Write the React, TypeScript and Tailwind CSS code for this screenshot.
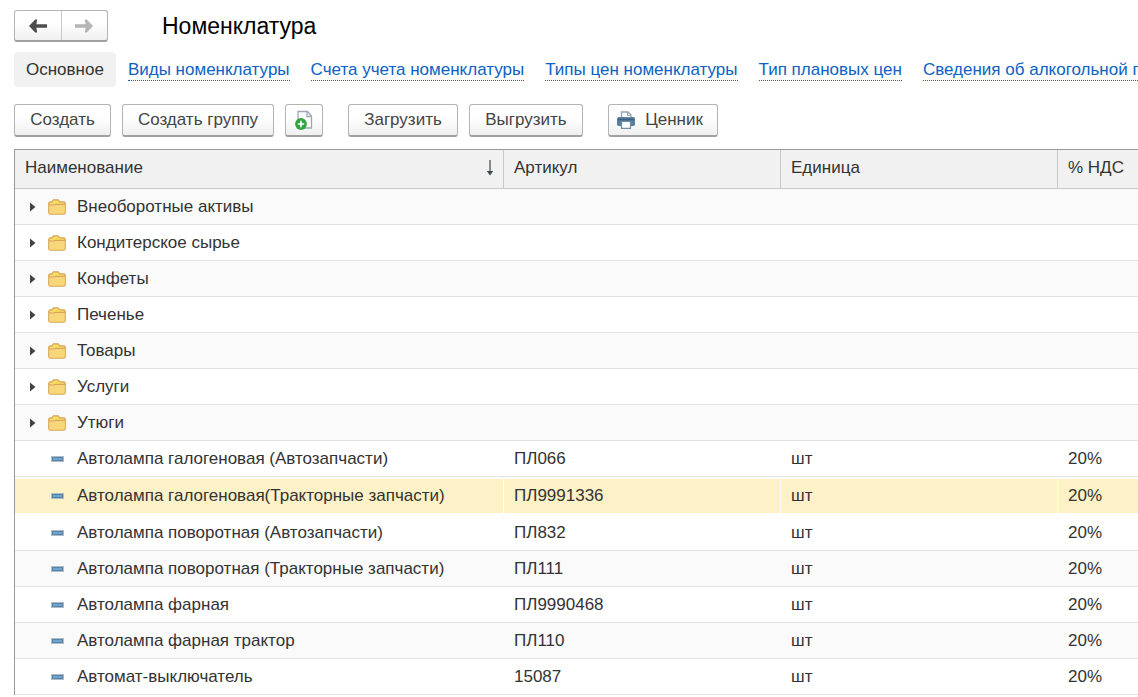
import { ReactNode } from "react"

const links = [
    "Виды номенклатуры",
    "Счета учета номенклатуры",
    "Типы цен номенклатуры",
    "Тип плановых цен",
    "Сведения об алкогольной п",
]

const folders = [
    "Внеоборотные активы",
    "Кондитерское сырье",
    "Конфеты",
    "Печенье",
    "Товары",
    "Услуги",
    "Утюги",
]

const items = [
    { name: "Автолампа галогеновая (Автозапчасти)", article: "ПЛ066" },
    { name: "Автолампа галогеновая(Тракторные запчасти)", article: "ПЛ9991336", selected: true },
    { name: "Автолампа поворотная (Автозапчасти)", article: "ПЛ832" },
    { name: "Автолампа поворотная (Тракторные запчасти)", article: "ПЛ111" },
    { name: "Автолампа фарная", article: "ПЛ9990468" },
    { name: "Автолампа фарная трактор", article: "ПЛ110" },
    { name: "Автомат-выключатель", article: "15087" },
]

const ArrowIcon = ({ className }: { className: string }) => (
    <svg className={className} width="18" height="14" viewBox="0 0 18 14" fill="currentColor">
        <path d="M0 7 6.2.4h2L7.4 5.2H18v3.6H7.4l.8 4.8h-2z" />
    </svg>
)

const NewFileIcon = () => (
    <svg width="18" height="20" viewBox="0 0 18 20" fill="none">
        <path d="M3 1.5h9.5l4 4.5v12H3z" fill="#fbfcfd" stroke="#9aa8b7" strokeWidth="1.3" />
        <path d="M12 1.5V6.5h4.5" stroke="#9aa8b7" strokeWidth="1.3" />
        <circle cx="6" cy="14" r="5.9" fill="#35a342" />
        <path d="M6 10.8v6.4M2.8 14h6.4" stroke="#fff" strokeWidth="1.6" />
    </svg>
)

const PrinterIcon = () => (
    <svg width="18" height="18" viewBox="0 0 18 18" fill="none">
        <path d="M4.5 7V1h6.5l3 3v3" fill="#fff" stroke="#94a5b8" strokeWidth="1.3" />
        <path d="M10.5 1v3.5H14" stroke="#94a5b8" />
        <rect x="0" y="6" width="18" height="9" rx="1.8" fill="#5b7f9f" />
        <path d="M1 8.5h16" stroke="#3c5f80" strokeWidth="1.6" />
        <path d="M4.5 10.5h9v6.8h-9z" fill="#fff" stroke="#6f8ba6" strokeWidth="1.2" />
    </svg>
)

const FolderIcon = () => (
    <svg width="18" height="16" viewBox="0 0 18 16" fill="none">
        <path d="M.8 13.5V4l1.2-1.2h1.9L5.5.8h4.6l1.7 2h4.2L17.2 4v9.5q0 1.7-1.7 1.7h-13Q.8 15.2.8 13.5z" fill="#fadd62" stroke="#d6a55c" strokeWidth="1.3" />
        <path d="M1.4 6h15.2v7.6q0 1-1 1H2.4q-1 0-1-1z" fill="#f8d77a" />
        <path d="M1 6h5.4l1-.6H17" stroke="#d6a55c" strokeWidth="1.1" />
    </svg>
)

const ItemIcon = () => (
    <svg width="13" height="6" viewBox="0 0 13 6" shapeRendering="crispEdges">
        <rect width="13" height="6" fill="#aebcc8" />
        <rect x="1" y="1" width="11" height="4" fill="#5784a9" />
        <rect x="2" y="2" width="9" height="2" fill="#6fa3cb" />
    </svg>
)

const Button = ({ children, className }: { children: ReactNode; className: string }) => (
    <button
        type="button"
        className={`flex h-[33px] items-center justify-center rounded-[3px] border border-[#b3b3b3] border-b-2 border-b-[#a0a0a0] bg-linear-to-b from-white from-40% to-[#f0f0f0] text-[#444] ${className}`}
    >
        {children}
    </button>
)

const Header = ({ children, className }: { children: ReactNode; className: string }) => (
    <th className={`border-b border-[#c8c8c8] p-0 pb-0.5 text-left font-normal ${className}`}>{children}</th>
)

const App = () => {
    return (
        <main className="overflow-hidden bg-white pl-3.5 pt-2.5 font-['Liberation_Sans',Arial,sans-serif] text-[17px] leading-6 whitespace-nowrap text-[#333]">
            <header className="flex h-8 items-center">
                <div className="flex h-8 w-[94px] rounded-[3px] border border-[#b3b3b3] border-b-2 border-b-[#a0a0a0] bg-linear-to-b from-white from-40% to-[#f0f0f0]">
                    <button type="button" aria-label="Назад" className="flex flex-1 items-center justify-center border-r border-[#c8c8c8] text-[#4d4d4d]">
                        <ArrowIcon className="" />
                    </button>
                    <button type="button" aria-label="Вперед" className="flex flex-1 items-center justify-center text-[#b5b5b5]">
                        <ArrowIcon className="rotate-180" />
                    </button>
                </div>
                <h1 className="ml-[54px] text-[23px] text-black">Номенклатура</h1>
            </header>

            <nav className="mt-2.5 flex h-[35px] items-center">
                <span className="flex h-full shrink-0 items-center rounded-sm bg-[#f1f1f1] px-3">Основное</span>
                <div className="ml-3 flex gap-[21px]">
                    {links.map((link) => (
                        <a key={link} href="#" className="border-b border-dotted border-[#0a62c4] leading-[21px] text-[#0a62c4]">
                            {link}
                        </a>
                    ))}
                </div>
            </nav>

            <div className="mt-[17px] flex">
                <Button className="w-[97px]">Создать</Button>
                <Button className="ml-[11px] w-[152px]">Создать группу</Button>
                <button
                    type="button"
                    aria-label="Создать копированием"
                    className="ml-[11px] flex h-[33px] w-[38px] items-center justify-center rounded-[3px] border border-[#b3b3b3] border-b-2 border-b-[#a0a0a0] bg-linear-to-b from-white from-40% to-[#f0f0f0]"
                >
                    <NewFileIcon />
                </button>
                <Button className="ml-[25px] w-[110px]">Загрузить</Button>
                <Button className="ml-[11px] w-[114px]">Выгрузить</Button>
                <Button className="ml-[25px] w-[110px] gap-2.5 pr-1.5">
                    <PrinterIcon />
                    Ценник
                </Button>
            </div>

            <table className="mt-3 w-full table-fixed border-separate border-spacing-0 border-t border-l border-[#999]">
                <colgroup>
                    <col />
                    <col className="w-[277px]" />
                    <col className="w-[277px]" />
                    <col className="w-20" />
                </colgroup>
                <thead>
                    <tr className="h-[39px] bg-[#f1f1f1]">
                        <Header className="border-r">
                            <div className="flex items-center justify-between pr-2 pl-2.5">
                                Наименование
                                <svg width="10" height="16" viewBox="0 0 10 16" fill="#3d4a52">
                                    <path d="M4.4 0h1.2v11h2.6L5 15.5 1.8 11h2.6z" />
                                </svg>
                            </div>
                        </Header>
                        <Header className="border-r pl-2.5">Артикул</Header>
                        <Header className="border-r pl-2.5">Единица</Header>
                        <Header className="pl-2.5">% НДС</Header>
                    </tr>
                </thead>
                <tbody>
                    {folders.map((folder) => (
                        <tr key={folder} className="h-9 odd:bg-[#fafafa]">
                            <td colSpan={4} className="border-b border-[#e2e2e2] p-0">
                                <div className="flex items-center pl-[15px]">
                                    <svg width="6" height="10" viewBox="0 0 6 10" fill="#444">
                                        <path d="M0 .5 5.5 5 0 9.5z" />
                                    </svg>
                                    <span className="mr-[11px] ml-3">
                                        <FolderIcon />
                                    </span>
                                    {folder}
                                </div>
                            </td>
                        </tr>
                    ))}
                    {items.map(({ name, article, selected }) => {
                        const cell = selected
                            ? "border-y-2 border-r border-white bg-[#fdf1c7] p-0 pl-2.5 last:border-r-0"
                            : "border-b border-[#e2e2e2] p-0 pl-2.5"
                        return (
                            <tr key={name} className={selected ? "h-[38px]" : "h-9 odd:bg-[#fafafa]"}>
                                <td className={cell}>
                                    <div className="flex items-center gap-[13px] pl-[26px]">
                                        <ItemIcon />
                                        {name}
                                    </div>
                                </td>
                                <td className={cell}>{article}</td>
                                <td className={cell}>шт</td>
                                <td className={cell}>20%</td>
                            </tr>
                        )
                    })}
                </tbody>
            </table>
        </main>
    )
}

export default App
